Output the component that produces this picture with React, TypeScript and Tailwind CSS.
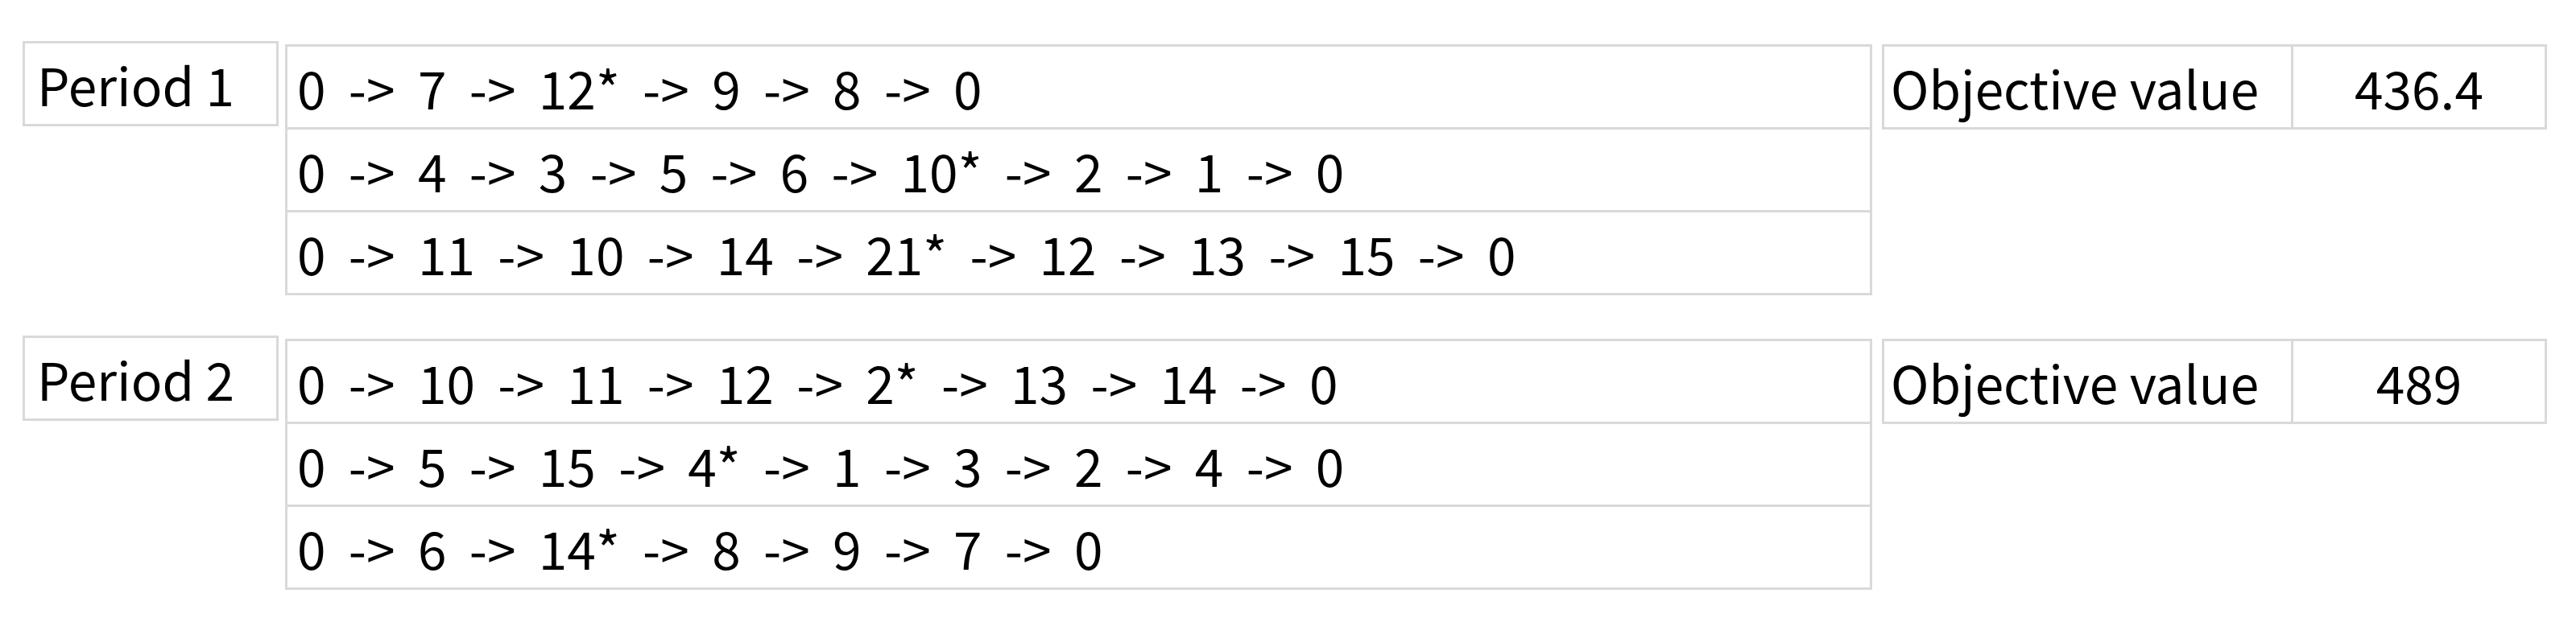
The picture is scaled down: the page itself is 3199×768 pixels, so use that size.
const periods = [
  {
    label: 'Period 1',
    routes: [
      '0 -> 7 -> 12* -> 9 -> 8 -> 0',
      '0 -> 4 -> 3 -> 5 -> 6 -> 10* -> 2 -> 1 -> 0',
      '0 -> 11 -> 10 -> 14 -> 21* -> 12 -> 13 -> 15 -> 0',
    ],
    objective: '436.4',
  },
  {
    label: 'Period 2',
    routes: [
      '0 -> 10 -> 11 -> 12 -> 2* -> 13 -> 14 -> 0',
      '0 -> 5 -> 15 -> 4* -> 1 -> 3 -> 2 -> 4 -> 0',
      '0 -> 6 -> 14* -> 8 -> 9 -> 7 -> 0',
    ],
    objective: '489',
  },
];

const PeriodBlock = ({ label, routes, objective }: { label: string; routes: string[]; objective: string }) => (
  <div className="flex items-start">
    {/* period label */}
    <div className="w-[318px] h-[106px] border-[3px] border-[#d9d9d9] flex items-center pl-[15px] shrink-0">
      {label}
    </div>

    {/* routes */}
    <div className="ml-[8px] mt-[4px] w-[1971px] flex flex-col shrink-0">
      {routes.map((r, i) => (
        <div
          key={i}
          className={`h-[106px] border-[3px] border-[#d9d9d9] flex items-center pl-[12px] whitespace-pre [word-spacing:14px] ${i > 0 ? '-mt-[3px]' : ''}`}
        >
          {r}
        </div>
      ))}
    </div>

    {/* objective */}
    <div className="ml-[12px] mt-[4px] w-[826px] h-[106px] border-[3px] border-[#d9d9d9] flex shrink-0">
      <div className="w-[508px] flex items-center pl-[8px] border-r-[3px] border-[#d9d9d9]">Objective value</div>
      <div className="flex-1 flex items-center justify-center">{objective}</div>
    </div>
  </div>
);

export default function App() {
  return (
    <div
      className="w-[3199px] h-[768px] bg-white text-black text-[64px] leading-none pl-[28px] pt-[51px] flex flex-col gap-[50px] overflow-hidden"
      style={{ fontFamily: '"Noto Sans CJK KR", "Noto Sans", sans-serif' }}
    >
      {periods.map((p) => (
        <PeriodBlock key={p.label} {...p} />
      ))}
    </div>
  );
}
